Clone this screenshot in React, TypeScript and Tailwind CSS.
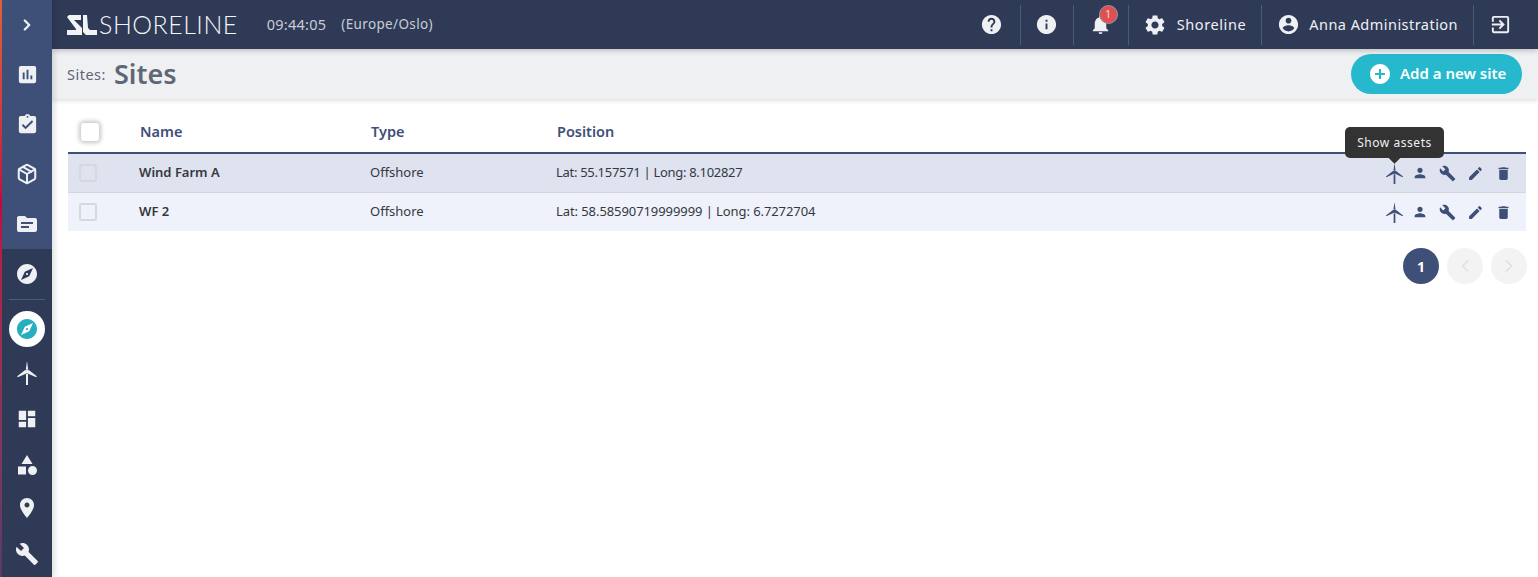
import type { ReactNode } from "react"
import { ChevronLeft, ChevronRight, Package } from "lucide-react"

const font = "font-['Noto_Sans','Open_Sans',sans-serif]"

const paths = {
  assessment: "M19 3H5c-1.1 0-2 .9-2 2v14c0 1.1.9 2 2 2h14c1.1 0 2-.9 2-2V5c0-1.1-.9-2-2-2zM9 17H7v-7h2v7zm4 0h-2V7h2v10zm4 0h-2v-4h2v4z",
  assignment: "M19 3h-4.18C14.4 1.84 13.3 1 12 1c-1.3 0-2.4.84-2.82 2H5c-1.1 0-2 .9-2 2v14c0 1.1.9 2 2 2h14c1.1 0 2-.9 2-2V5c0-1.1-.9-2-2-2zm-7 0c.55 0 1 .45 1 1s-.45 1-1 1-1-.45-1-1 .45-1 1-1zm-2 14l-4-4 1.41-1.41L10 14.17l6.59-6.59L18 9l-8 8z",
  topic: "M20 6h-8l-2-2H4c-1.1 0-1.99.9-1.99 2L2 18c0 1.1.9 2 2 2h16c1.1 0 2-.9 2-2V8c0-1.1-.9-2-2-2zm-6 10H6v-2h8v2zm4-4H6v-2h12v2z",
  explore: "M12 10.9c-.61 0-1.1.49-1.1 1.1s.49 1.1 1.1 1.1c.61 0 1.1-.49 1.1-1.1s-.49-1.1-1.1-1.1zM12 2C6.48 2 2 6.48 2 12s4.48 10 10 10 10-4.48 10-10S17.52 2 12 2zm2.19 12.19L6 18l3.81-8.19L18 6l-3.81 8.19z",
  dashboard: "M3 13h8V3H3v10zm0 8h8v-6H3v6zm10 0h8V11h-8v10zm0-18v6h8V3h-8z",
  category: "M12 2l-5.5 9h11zM3 13.5h8v8H3zM17.5 13a4.5 4.5 0 1 0 0 9 4.5 4.5 0 0 0 0-9z",
  place: "M12 2C8.13 2 5 5.13 5 9c0 5.25 7 13 7 13s7-7.75 7-13c0-3.87-3.13-7-7-7zm0 9.5c-1.38 0-2.5-1.12-2.5-2.5s1.12-2.5 2.5-2.5 2.5 1.12 2.5 2.5-1.12 2.5-2.5 2.5z",
  build: "M22.7 19l-9.1-9.1c.9-2.3.4-5-1.5-6.9-2-2-5-2.4-7.4-1.3L9 6 6 9 1.6 4.7C.4 7.1.9 10.1 2.9 12.1c1.9 1.9 4.6 2.4 6.9 1.5l9.1 9.1c.4.4 1 .4 1.4 0l2.3-2.3c.5-.4.5-1.1.1-1.4z",
  help: "M12 2C6.48 2 2 6.48 2 12s4.48 10 10 10 10-4.48 10-10S17.52 2 12 2zm1 17h-2v-2h2v2zm2.07-7.75l-.9.92C13.45 12.9 13 13.5 13 15h-2v-.5c0-1.1.45-2.1 1.17-2.83l1.24-1.26c.37-.36.59-.86.59-1.41 0-1.1-.9-2-2-2s-2 .9-2 2H8c0-2.21 1.79-4 4-4s4 1.79 4 4c0 .88-.36 1.68-.93 2.25z",
  info: "M12 2C6.48 2 2 6.48 2 12s4.48 10 10 10 10-4.48 10-10S17.52 2 12 2zm1 15h-2v-6h2v6zm0-8h-2V7h2v2z",
  bell: "M12 22c1.1 0 2-.9 2-2h-4c0 1.1.89 2 2 2zm6-6v-5c0-3.07-1.64-5.64-4.5-6.32V4c0-.83-.67-1.5-1.5-1.5s-1.5.67-1.5 1.5v.68C7.63 5.36 6 7.92 6 11v5l-2 2v1h16v-1l-2-2z",
  settings: "M19.14 12.94c.04-.3.06-.61.06-.94 0-.32-.02-.64-.07-.94l2.03-1.58c.18-.14.23-.41.12-.61l-1.92-3.32c-.12-.22-.37-.29-.59-.22l-2.39.96c-.5-.38-1.03-.7-1.62-.94l-.36-2.54c-.04-.24-.24-.41-.48-.41h-3.84c-.24 0-.43.17-.47.41l-.36 2.54c-.59.24-1.13.57-1.62.94l-2.39-.96c-.22-.08-.47 0-.59.22L2.74 8.87c-.12.21-.08.47.12.61l2.03 1.58c-.05.3-.09.63-.09.94s.02.64.07.94l-2.03 1.58c-.18.14-.23.41-.12.61l1.92 3.32c.12.22.37.29.59.22l2.39-.96c.5.38 1.03.7 1.62.94l.36 2.54c.05.24.24.41.48.41h3.84c.24 0 .44-.17.47-.41l.36-2.54c.59-.24 1.13-.56 1.62-.94l2.39.96c.22.08.47 0 .59-.22l1.92-3.32c.12-.22.07-.47-.12-.61l-2.01-1.58zM12 15.6c-1.98 0-3.6-1.62-3.6-3.6s1.62-3.6 3.6-3.6 3.6 1.62 3.6 3.6-1.62 3.6-3.6 3.6z",
  account: "M12 2C6.48 2 2 6.48 2 12s4.48 10 10 10 10-4.48 10-10S17.52 2 12 2zm0 3c1.66 0 3 1.34 3 3s-1.34 3-3 3-3-1.34-3-3 1.34-3 3-3zm0 14.2c-2.5 0-4.71-1.28-6-3.22.03-1.99 4-3.08 6-3.08 1.99 0 5.97 1.09 6 3.08-1.29 1.94-3.5 3.22-6 3.22z",
  exit: "M10.09 15.59L11.5 17l5-5-5-5-1.41 1.41L12.67 11H3v2h9.67l-2.58 2.59zM19 3H5c-1.11 0-2 .9-2 2v4h2V5h14v14H5v-4H3v4c0 1.1.89 2 2 2h14c1.1 0 2-.9 2-2V5c0-1.1-.9-2-2-2z",
  person: "M12 12c2.21 0 4-1.79 4-4s-1.79-4-4-4-4 1.79-4 4 1.79 4 4 4zm0 2c-2.67 0-8 1.34-8 4v2h16v-2c0-2.66-5.33-4-8-4z",
  edit: "M3 17.25V21h3.75L17.81 9.94l-3.75-3.75L3 17.25zM20.71 7.04c.39-.39.39-1.02 0-1.41l-2.34-2.34c-.39-.39-1.02-.39-1.41 0l-1.83 1.83 3.75 3.75 1.83-1.83z",
  trash: "M6 19c0 1.1.9 2 2 2h8c1.1 0 2-.9 2-2V7H6v12zM19 4h-3.5l-1-1h-5l-1 1H5v2h14V4z",
  add: "M12 2C6.48 2 2 6.48 2 12s4.48 10 10 10 10-4.48 10-10S17.52 2 12 2zm5 11h-4v4h-2v-4H7v-2h4V7h2v4h4v2z",
}

function Icon({ d, className }: { d: string; className: string }) {
  return (
    <svg viewBox="0 0 24 24" fill="currentColor" fillRule="evenodd" className={className}>
      <path d={d} />
    </svg>
  )
}

// wind turbine: mast, hub and three thin blades
function Turbine({ className }: { className: string }) {
  return (
    <svg viewBox="0 0 24 24" fill="currentColor" className={className}>
      <path d="M12 0l1.200 8.500h-2.400z" />
      <path d="M13.800 9l8 6.300-.5.900-8.700-3.800z" />
      <path d="M10.200 9l-8 6.300.5.900 8.700-3.800z" />
      <path d="M11 13h2v11h-2z" />
      <circle cx="12" cy="10.500" r="2" />
    </svg>
  )
}

function SideItem({ children, height }: { children: ReactNode; height: string }) {
  return <div className={`${height} shrink-0 flex items-center justify-center text-[#eff0f4]`}>{children}</div>
}

function Divider() {
  return <div className="w-px h-10 bg-[#4a5a80]" />
}

function Checkbox() {
  return <div className="w-[18px] h-[18px] rounded-[3px] border-2 border-[#d5d8de]" />
}

function Row({ name, position, posClass, bg, last }: { name: string; position: string; posClass: string; bg: string; last?: boolean }) {
  return (
    <div className={`flex items-center ${last ? "h-[38px]" : "h-[39px] border-b border-[#d4d6da]"} ${bg} text-[13px] text-[#35383f]`}>
      <div className="w-[71px] pl-[11px]">
        <Checkbox />
      </div>
      <div className="w-[231px] font-semibold">{name}</div>
      <div className="w-[186px]">Offshore</div>
      <div className={`flex-1 ${posClass}`}>{position}</div>
      <div className="flex items-center pr-[9px] text-[#3f5078]">
        <div className="w-[26px] flex justify-center">
          <Turbine className="w-[21px] h-[21px]" />
        </div>
        <div className="w-[26px] flex justify-center">
          <Icon d={paths.person} className="w-[16px] h-[16px]" />
        </div>
        <div className="w-[28px] flex justify-center">
          <Icon d={paths.build} className="w-[17px] h-[17px]" />
        </div>
        <div className="w-[28px] flex justify-center">
          <Icon d={paths.edit} className="w-[17px] h-[17px]" />
        </div>
        <div className="w-[28px] flex justify-center">
          <Icon d={paths.trash} className="w-[17px] h-[17px]" />
        </div>
      </div>
    </div>
  )
}

export default function App() {
  return (
    <div className={`h-[577px] w-[1538px] overflow-hidden flex bg-white ${font}`}>
      {/* Sidebar */}
      <aside className="w-[52px] shrink-0 flex bg-[#2f3a57] shadow-[2px_0_6px_rgba(0,0,0,0.15)] z-20">
        <div className="w-[2px] bg-gradient-to-b from-[#e0603a] via-[#c2063f] via-35% to-[#5a3a68]" />
        <div className="flex-1 flex flex-col">
          <div className="bg-[#3f5078] shrink-0">
            <SideItem height="h-[49px]">
              <ChevronRight className="w-[18px] h-[18px] -ml-px" strokeWidth={3} />
            </SideItem>
            <SideItem height="h-[50px]">
              <Icon d={paths.assessment} className="w-[23px] h-[23px]" />
            </SideItem>
            <SideItem height="h-[50px]">
              <Icon d={paths.assignment} className="w-[23px] h-[23px]" />
            </SideItem>
            <SideItem height="h-[50px]">
              <Package className="w-[22px] h-[22px]" strokeWidth={2.2} />
            </SideItem>
            <SideItem height="h-[50px]">
              <Icon d={paths.topic} className="w-[24px] h-[24px]" />
            </SideItem>
          </div>
          <SideItem height="h-[50px]">
            <Icon d={paths.explore} className="w-[24px] h-[24px]" />
          </SideItem>
          <div className="h-px shrink-0 mx-[7px] bg-[#4a5a80]" />
          <div className="flex justify-center shrink-0 mt-[11px] mb-[3px]">
            <div className="w-9 h-9 rounded-full bg-white flex items-center justify-center text-[#26aebf]">
              <Icon d={paths.explore} className="w-[24px] h-[24px]" />
            </div>
          </div>
          <SideItem height="h-[46px]">
            <Turbine className="w-[24px] h-[24px]" />
          </SideItem>
          <SideItem height="h-[46px]">
            <Icon d={paths.dashboard} className="w-[22px] h-[22px]" />
          </SideItem>
          <SideItem height="h-[46px]">
            <Icon d={paths.category} className="w-[24px] h-[24px]" />
          </SideItem>
          <SideItem height="h-[40px]">
            <Icon d={paths.place} className="w-[24px] h-[24px]" />
          </SideItem>
          <SideItem height="h-[52px]">
            <Icon d={paths.build} className="w-[24px] h-[24px]" />
          </SideItem>
        </div>
      </aside>

      <div className="flex-1 flex flex-col min-w-0">
        {/* Top bar */}
        <header className="h-[49px] shrink-0 bg-[#2f3a57] flex items-center text-[#eff0f4] z-10 shadow-[0_2px_5px_rgba(0,0,0,0.2)]">
          <div className="flex items-center pl-[15px]">
            <svg viewBox="0 0 30 20" className="w-[30px] h-[20px]" fill="#f2f3f5">
              <path d="M0 2L2 0H14V5H7L15 13V20H0V15H9V14Z" />
              <path d="M16 0H20L21 13L23 15H30V20H19L16 17Z" />
            </svg>
            <span className="ml-[2px] text-[25px] leading-none font-['Lato',sans-serif] font-light tracking-[0.5px] text-[#f4f5f7]">SHORELINE</span>
          </div>
          <span className="ml-[29px] text-[14.5px] tracking-[0.25px] text-[#c9ccd4]">09:44:05</span>
          <span className="ml-[15px] text-[13.5px] tracking-[0.35px] text-[#c9ccd4]">(Europe/Oslo)</span>

          <div className="ml-auto flex items-center pr-[26px]">
            <Icon d={paths.help} className="w-[23px] h-[23px]" />
            <div className="w-[17px]" />
            <Divider />
            <div className="w-[14px]" />
            <Icon d={paths.info} className="w-[23px] h-[23px]" />
            <div className="w-[15px]" />
            <Divider />
            <div className="w-[15px]" />
            <div className="relative">
              <Icon d={paths.bell} className="w-[23px] h-[23px]" />
              <span className="absolute -top-[8px] left-[10px] w-[19px] h-[19px] rounded-full bg-[#df5050] border border-[#8f96a8] flex items-center justify-center text-[11px] text-[#f5dada]">1</span>
            </div>
            <div className="w-[16px]" />
            <Divider />
            <Icon d={paths.settings} className="w-[24px] h-[24px] ml-[14px]" />
            <span className="ml-[10px] text-[14.5px] tracking-[0.6px]">Shoreline</span>
            <div className="w-[15px]" />
            <Divider />
            <Icon d={paths.account} className="w-[23px] h-[23px] ml-[15px]" />
            <span className="ml-[9px] text-[14.5px] tracking-[0.46px]">Anna Administration</span>
            <div className="w-[15px]" />
            <Divider />
            <Icon d={paths.exit} className="w-[23px] h-[23px] ml-[15px]" />
          </div>
        </header>

        {/* Sub header */}
        <div className="h-[50px] shrink-0 bg-[#eff0f2] flex items-center pl-[15px] pr-4 shadow-[0_2px_4px_rgba(0,0,0,0.12)] z-[5]">
          <span className="text-[14.5px] tracking-[0.5px] text-[#5f6573] mt-[1px]">Sites:</span>
          <span className="ml-[8px] text-[27px] font-semibold text-[#5f6775]">Sites</span>
          <button className="ml-auto h-10 w-[171px] rounded-full bg-[#26b9ce] flex items-center pl-[17px] text-white text-[15px] font-semibold">
            <Icon d={paths.add} className="w-[24px] h-[24px]" />
            <span className="ml-[8px] -mt-[2px]">Add a new site</span>
          </button>
        </div>

        {/* Table */}
        <main className="flex-1 pl-4 pr-3">
          <div className="h-[55px] pt-[12px] flex items-center border-b-2 border-[#3f5078] text-[14.5px] font-semibold text-[#3f5078]">
            <div className="w-[72px] pl-[13px]">
              <div className="w-[18px] h-[18px] rounded-[3px] bg-white shadow-[0_0_4px_2px_rgba(0,0,0,0.22)]" />
            </div>
            <div className="w-[231px]">Name</div>
            <div className="w-[186px]">Type</div>
            <div>Position</div>
          </div>
          <div className="relative">
            <Row name="Wind Farm A" position="Lat: 55.157571 | Long: 8.102827" posClass="tracking-[-0.3px]" bg="bg-[#dee3ef]" />
            <Row name="WF 2" position="Lat: 58.58590719999999 | Long: 6.7272704" posClass="tracking-[-0.08px]" bg="bg-[#eff2fa]" last />
            {/* Tooltip over the first turbine icon */}
            <div className="absolute -top-[27px] left-[1277px] w-[99px] h-[31px] rounded-[5px] bg-[#333333] text-[#f0f0f0] text-[12px] tracking-[0.55px] flex items-center justify-center">
              Show assets
              <span className="absolute -bottom-[4px] left-[45px] w-[9px] h-[9px] rotate-45 bg-[#333333]" />
            </div>
          </div>
          <div className="flex justify-end items-center gap-2 mt-[17px] -mr-px">
            <div className="w-9 h-9 rounded-full bg-[#3f5078] text-white text-[14px] font-bold flex items-center justify-center">1</div>
            <div className="w-9 h-9 rounded-full bg-[#f3f3f3] text-[#e0e0e0] flex items-center justify-center">
              <ChevronLeft className="w-5 h-5" />
            </div>
            <div className="w-9 h-9 rounded-full bg-[#f3f3f3] text-[#e0e0e0] flex items-center justify-center">
              <ChevronRight className="w-5 h-5" />
            </div>
          </div>
        </main>
      </div>
    </div>
  )
}
